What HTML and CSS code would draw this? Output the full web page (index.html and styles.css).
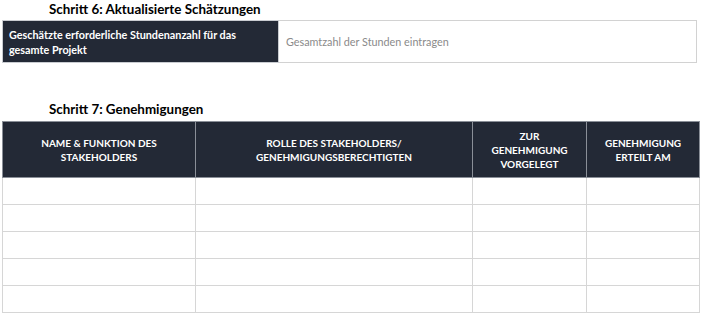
FILE: index.html
```html
<!DOCTYPE html>
<html lang="de">
<head>
<meta charset="utf-8">
<link rel="stylesheet" href="styles.css">
</head>
<body>
<h2 class="step-title">Schritt 6: Aktualisierte Schätzungen</h2>
<table class="estimate">
  <colgroup><col class="e1"><col class="e2"></colgroup>
  <tr>
    <th class="estimate-label">Geschätzte erforderliche Stundenanzahl für das gesamte Projekt</th>
    <td class="estimate-value">Gesamtzahl der Stunden eintragen</td>
  </tr>
</table>
<h2 class="step-title step-title-2">Schritt 7: Genehmigungen</h2>
<table class="approvals">
  <colgroup>
    <col class="c1"><col class="c2"><col class="c3"><col class="c4">
  </colgroup>
  <thead>
    <tr>
      <th>NAME &amp; FUNKTION DES<br>STAKEHOLDERS</th>
      <th>ROLLE DES STAKEHOLDERS/<br>GENEHMIGUNGSBERECHTIGTEN</th>
      <th>ZUR<br>GENEHMIGUNG<br>VORGELEGT</th>
      <th>GENEHMIGUNG<br>ERTEILT AM</th>
    </tr>
  </thead>
  <tbody>
    <tr><td></td><td></td><td></td><td></td></tr>
    <tr><td></td><td></td><td></td><td></td></tr>
    <tr><td></td><td></td><td></td><td></td></tr>
    <tr><td></td><td></td><td></td><td></td></tr>
    <tr><td></td><td></td><td></td><td></td></tr>
  </tbody>
</table>
</body>
</html>
```
FILE: styles.css
```css
html, body {
  margin: 0;
  padding: 0;
  background: #ffffff;
}
body {
  font-family: Lato, "Liberation Sans", sans-serif;
  padding: 0 2px;
  color: #000;
}
.step-title {
  margin: 0;
  padding-left: 47px;
  font-size: 13.4px;
  font-weight: 700;
  line-height: 18px;
  height: 20px;
}
.step-title-2 {
  margin-top: 37px;
  height: 20px;
  line-height: 18px;
}
table {
  border-collapse: collapse;
}
.estimate {
  width: 694px;
  height: 43px;
  table-layout: fixed;
}
.e1 { width: 276px; }
.e2 { width: 418px; }
.estimate-label {
  background: #232936;
  color: #fff;
  font-size: 10.8px;
  font-weight: 700;
  text-align: left;
  line-height: 15px;
  padding: 0 6px;
  border: 1px solid #c9ccd1;
}
.estimate-value {
  border: 1px solid #d2d2d2;
  color: #8a8a8a;
  font-size: 10.8px;
  padding: 0 7px;
}
.approvals {
  width: 697px;
  margin-top: 1px;
  table-layout: fixed;
}
.c1 { width: 193px; }
.c2 { width: 277px; }
.c3 { width: 114px; }
.c4 { width: 113px; }
.approvals th {
  height: 55px;
  background: #232936;
  color: #fff;
  font-size: 10px;
  font-weight: 700;
  line-height: 14px;
  padding: 0;
  border: 1px solid #8a8f98;
  text-align: center;
}
.approvals td {
  height: 26px;
  padding: 0;
  border: 1px solid #d6d6d6;
}
```
